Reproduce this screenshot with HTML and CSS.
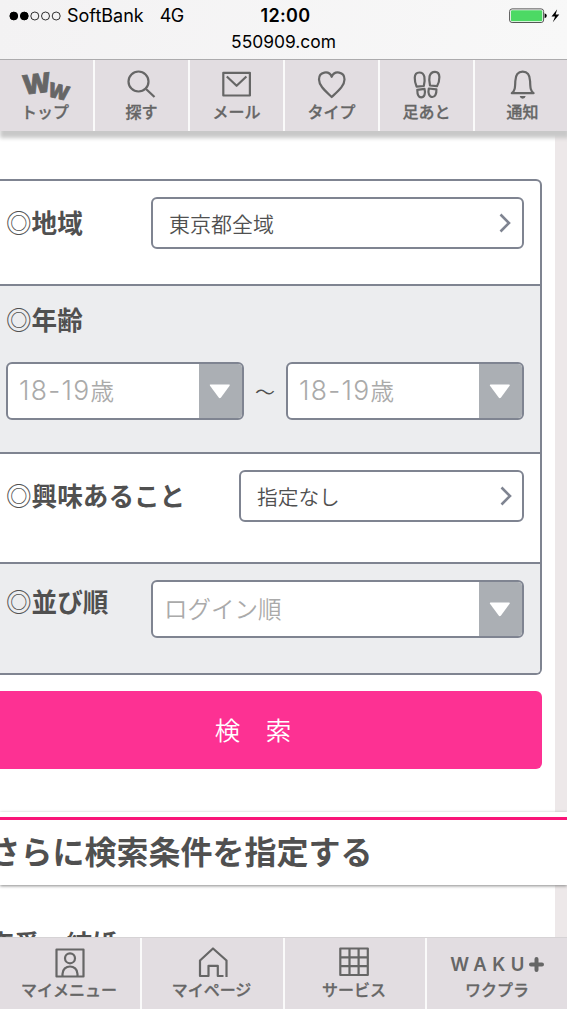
FILE: index.html
```html
<!DOCTYPE html>
<html lang="ja">
<head>
<meta charset="utf-8">
<title>550909.com</title>
<link rel="stylesheet" href="styles.css">
</head>
<body>
<div class="phone">
  <header class="status">
    <div class="status-row">
      <div class="status-left">
        <svg class="signal" width="52" height="10" viewBox="0 0 52 10"><g stroke="#000"><circle cx="4.8" cy="5" r="3.9"/><circle cx="15.3" cy="5" r="3.9"/><g fill="none" stroke-width=".8"><circle cx="25.8" cy="5" r="4"/><circle cx="36.5" cy="5" r="4"/><circle cx="47.2" cy="5" r="4"/></g></g></svg>
        <span class="carrier">SoftBank</span><span class="network">4G</span>
      </div>
      <b class="clock">12:00</b>
      <div class="status-right">
        <svg width="53" height="16" viewBox="0 0 53 16"><rect x=".6" y=".9" width="34" height="13.6" rx="2.5" fill="#fff" stroke="#555" stroke-width="1"/><rect x="1.9" y="2.2" width="31.4" height="11" rx="1.2" fill="#4cd964"/><path d="M35.6 5.2q2.200.6 2.200 2.500t-2.200 2.500z"/><path d="M48.200 1.200 42.500 8.500h3.600L43.800 14.300 50.300 6.600h-3.700z"/></svg>
      </div>
    </div>
    <div class="url">550909.com</div>
  </header>

  <nav class="topnav">
    <a class="tab"><span class="icon ww"><b class="w1">W</b><b class="w2">W</b></span><span class="tab-label">トップ</span></a>
    <a class="tab"><span class="icon"><svg width="32" height="30" viewBox="0 0 32 30"><circle cx="12.500" cy="11.5" r="10"/><path d="m20 19 8.500 8"/></svg></span><span class="tab-label">探す</span></a>
    <a class="tab"><span class="icon"><svg width="32" height="30" viewBox="0 0 32 30"><path d="M2.300 2.800h26.600v22.700H2.300z"/><path d="m5.800 6.500 9.800 9.300 9.800-9.300"/></svg></span><span class="tab-label">メール</span></a>
    <a class="tab"><span class="icon"><svg width="32" height="30" viewBox="0 0 32 30"><path d="M15.700 27C9.500 21 3 15.800 3 9.500c0-8 10-9.500 12.700-2.700C18.500 0 28.500 1.500 28.500 9.500 28.500 15.800 22 21 15.700 27z"/></svg></span><span class="tab-label">タイプ</span></a>
    <a class="tab"><span class="icon"><svg width="32" height="30" viewBox="0 0 32 30"><path d="M5.600 16.700C3.500 11.500 1.900 2.500 8.300 2.500c6 0 6 7 4.500 13.500zM26 16.200c2.800-5 4.200-14.400-2-14.400-6.200 0-6.500 7-5 13.700zM6.300 19.800l7.200-1c1.300 4.700-.1 8.600-3.400 8.600-3 0-3.800-3.500-3.800-7.600zM17.800 18.500l7.600.8c.2 4.500-1.200 7.700-3.900 7.700-3.500 0-4.700-4.200-3.700-8.500z"/></svg></span><span class="tab-label">足あと</span></a>
    <a class="tab"><span class="icon"><svg width="32" height="30" viewBox="0 0 32 30"><path d="M4.800 23.200c3-2 3.300-5 3.500-12 .2-6 2.800-9.500 7.400-9.500s7.200 3.500 7.400 9.500c.2 7 .5 10 3.500 12z"/><path class="solid" d="M12.700 26h6q-.6 2.800-3 2.800T12.700 26z"/></svg></span><span class="tab-label">通知</span></a>
  </nav>

  <main class="page">
    <div class="panel">
      <form class="filters">
        <div class="row row-area"><label class="name"><i>◎</i>地域</label><div class="link area"><span>東京都全域</span><svg class="chev" width="12" height="20" viewBox="0 0 12 20"><path d="m1.500 1.500 8.500 8.500-8.500 8.500"/></svg></div></div>
        <div class="row row-age">
          <label class="name"><i>◎</i>年齢</label>
          <div class="range">
            <div class="select"><span class="value"><span class="num">18-19</span>歳</span><em><svg width="22" height="15" viewBox="0 0 22 15"><path d="M1.500.5h18.600q1.200 0 .5 1.200L12 13.500q-1.200 1.400-2.300 0L1 1.700Q.3.500 1.500.5z"/></svg></em></div>
            <span class="tilde">～</span>
            <div class="select"><span class="value"><span class="num">18-19</span>歳</span><em><svg width="22" height="15" viewBox="0 0 22 15"><path d="M1.500.5h18.600q1.200 0 .5 1.200L12 13.500q-1.200 1.400-2.300 0L1 1.700Q.3.500 1.500.5z"/></svg></em></div>
          </div>
        </div>
        <div class="row row-interest"><label class="name"><i>◎</i>興味あること</label><div class="link interest"><span>指定なし</span><svg class="chev" width="12" height="20" viewBox="0 0 12 20"><path d="m1.500 1.500 8.500 8.500-8.500 8.500"/></svg></div></div>
        <div class="row row-sort"><label class="name"><i>◎</i>並び順</label><div class="select sort"><span class="value">ログイン順</span><em><svg width="22" height="15" viewBox="0 0 22 15"><path d="M1.500.5h18.600q1.200 0 .5 1.200L12 13.500q-1.200 1.400-2.300 0L1 1.700Q.3.500 1.500.5z"/></svg></em></div></div>
      </form>
      <div class="submit">検　索</div>
    </div>
    <h2 class="more">さらに検索条件を指定する</h2>
    <div class="panel rest"><div class="topic">恋愛・結婚</div></div>
  </main>

  <nav class="bottomnav">
    <a class="tab"><span class="icon"><svg width="32" height="32" viewBox="0 0 32 32"><path d="M2.500 2.500h27v27h-27z"/><circle cx="16" cy="11.300" r="5"/><path d="M8.500 29v-2c0-10 15-10 15 0v2"/></svg></span><span class="tab-label">マイメニュー</span></a>
    <a class="tab"><span class="icon"><svg width="32" height="32" viewBox="0 0 32 32"><path d="M29.500 30V13.500L16 1.500 3 13.500v15.500h8.500V18.800h9.300V29h5.700"/></svg></span><span class="tab-label">マイページ</span></a>
    <a class="tab"><span class="icon"><svg width="32" height="32" viewBox="0 0 32 32"><path d="M1.300 1.500h27.500v26.500H1.300zM10.500 1.500V28M19.600 1.500V28M1.300 10.300h27.500M1.300 19.200h27.500"/></svg></span><span class="tab-label">サービス</span></a>
    <a class="tab"><span class="icon waku"><b>WAKU</b><svg width="15" height="15" viewBox="0 0 15 15"><path d="M7.500 2v11M2 7.500h11"/></svg></span><span class="tab-label">ワクプラ</span></a>
  </nav>
</div>
</body>
</html>
```
FILE: styles.css
```css
* { box-sizing: border-box; }
body { margin: 0; font-family: "Noto Sans CJK JP", sans-serif; color: #505050; background: #ede8e9; }
.phone { width: 567px; height: 1009px; display: flex; flex-direction: column; overflow: hidden; }
svg { display: block; }

.status { flex: none; height: 60px; background: linear-gradient(100deg, #f3f2f3, #f8f8f8); border-bottom: 1px solid #acabad; color: #000; font-family: Inter, sans-serif; }
.status-row { display: grid; grid-template-columns: 1fr auto 1fr; align-items: center; height: 31px; padding: 0 5px 0 9px; font-size: 18px; }
.status-left { display: flex; align-items: center; white-space: nowrap; }
.carrier { margin-left: 6px; }
.network { margin-left: 16px; letter-spacing: -.5px; }
.clock { font-size: 18px; font-weight: 600; letter-spacing: .3px; }
.status-right { display: flex; justify-content: flex-end; }
.url { text-align: center; font-size: 17.400px; line-height: 22px; }

.topnav { flex: none; height: 71px; display: grid; grid-template-columns: 95px 95px 95px 95px 95px 1fr; background: #e2dde1; position: relative; box-shadow: 1px 6px 4px 1px #c8c8c8; }
.tab { display: flex; flex-direction: column; align-items: center; border-right: 2px solid #fafafa; color: #666; }
.tab:last-child { border-right: 0; }
.icon { display: flex; justify-content: center; height: 30px; }
.icon svg { fill: none; stroke: #666; stroke-width: 2.2; stroke-linejoin: round; }
.icon svg .solid { fill: #666; stroke: none; }
.tab-label { font-size: 16px; font-weight: 500; line-height: 20px; white-space: nowrap; -webkit-text-stroke: .3px #666; }
.topnav .icon { margin-top: 10px; }
.topnav .tab-label { margin-top: 1px; }
.topnav .tab:first-child .tab-label { margin-right: 3px; }
.topnav .tab:last-child { padding-left: 3px; }
.ww { font-family: "Open Sans", sans-serif; font-weight: 800; }
.w1 { font-size: 27px; line-height: 26px; transform: rotate(-7deg); -webkit-text-stroke: .8px #666; }
.w2 { font-size: 20px; line-height: 44px; transform: rotate(14deg); margin-left: -1px; -webkit-text-stroke: .8px #666; }

.page { flex: 1; min-height: 0; overflow: hidden; }
.panel { width: 555px; height: 681px; padding-top: 48px; background: #fff; }
.filters { width: 542px; height: 496px; border: 2px solid #7f8491; border-left: 0; border-radius: 0 6px 6px 0; overflow: hidden; }
.row { display: flex; justify-content: space-between; align-items: flex-start; padding: 16px 16px 0 6px; border-bottom: 2px solid #7f8491; }
.row-area { height: 105px; }
.row-age { height: 168px; flex-direction: column; justify-content: flex-start; background: #ecedef; padding-top: 9px; }
.row-interest { height: 110px; }
.row-sort { height: 109px; background: #ecedef; border-bottom: 0; }
.name { font-size: 25.600px; line-height: 50px; font-weight: 700; white-space: nowrap; }
.name i { font-style: normal; font-weight: 350; }
.row-age .name { line-height: 48px; }
.row-sort .name { line-height: 42px; }
.link { height: 52px; padding: 0 11px 1px 16px; display: flex; align-items: center; justify-content: space-between; background: #fff; border: 2px solid #7f8491; border-radius: 6px; font-size: 21px; font-weight: 350; }
.area { width: 373px; }
.interest { width: 285px; padding-right: 10px; font-size: 20.700px; }
.chev { fill: none; stroke: #7f8491; stroke-width: 2.600; }
.range { display: flex; align-items: center; justify-content: space-between; width: 518px; margin-top: 19px; }
.tilde { font-size: 20px; font-weight: 350; }
.select { width: 238px; height: 58px; display: flex; align-items: center; justify-content: space-between; padding-left: 11px; background: #fff; border: 2px solid #7f8491; border-radius: 6px; overflow: hidden; color: #aaa; font-size: 23.500px; font-weight: 350; }
.value { padding-bottom: 2px; }
.num { font-family: Inter, sans-serif; font-size: 26.500px; font-weight: 300; letter-spacing: 1.300px; }
.select em { width: 43px; height: 100%; display: flex; align-items: center; justify-content: center; padding-right: 2px; background: #abafb4; }
.select em svg { fill: #fff; }
.sort { width: 373px; }
.submit { width: 542px; height: 78px; margin-top: 16px; padding-right: 36px; border-radius: 0 6px 6px 0; background: #fd3193; color: #fff; font-size: 25.500px; font-weight: 350; line-height: 75px; text-align: center; }
.more { position: relative; margin: 0; height: 73px; padding-top: 5px; background: linear-gradient(#fff 5px, #f91578 5px, #f91578 8px, #fff 8px); box-shadow: 0 1px 3px #888; font-size: 32px; font-weight: 700; line-height: 66px; white-space: nowrap; text-indent: -11.500px; }
.rest { height: 60px; padding-top: 40px; }
.topic { font-size: 26px; line-height: 36px; font-weight: 700; text-indent: -12px; white-space: nowrap; }

.bottomnav { position: relative; flex: none; height: 72px; display: grid; grid-template-columns: 142px 143px 142px 1fr; background: #e2dde1; border-top: 1px solid #d6d3d5; }
.bottomnav .tab { padding: 9px 2px 0 0; }
.bottomnav .icon { height: 32px; }
.bottomnav .icon svg { margin-left: 2px; }
.bottomnav .tab:last-child { padding: 9px 0 0; }
.bottomnav .waku { align-items: center; height: 34px; }
.bottomnav .waku + .tab-label { margin-top: -2px; }
.waku b { font-family: Inter, sans-serif; font-size: 18.500px; font-weight: 600; letter-spacing: 5.500px; margin-right: -3px; }
.waku svg { stroke-width: 4; stroke-linecap: round; }
```
